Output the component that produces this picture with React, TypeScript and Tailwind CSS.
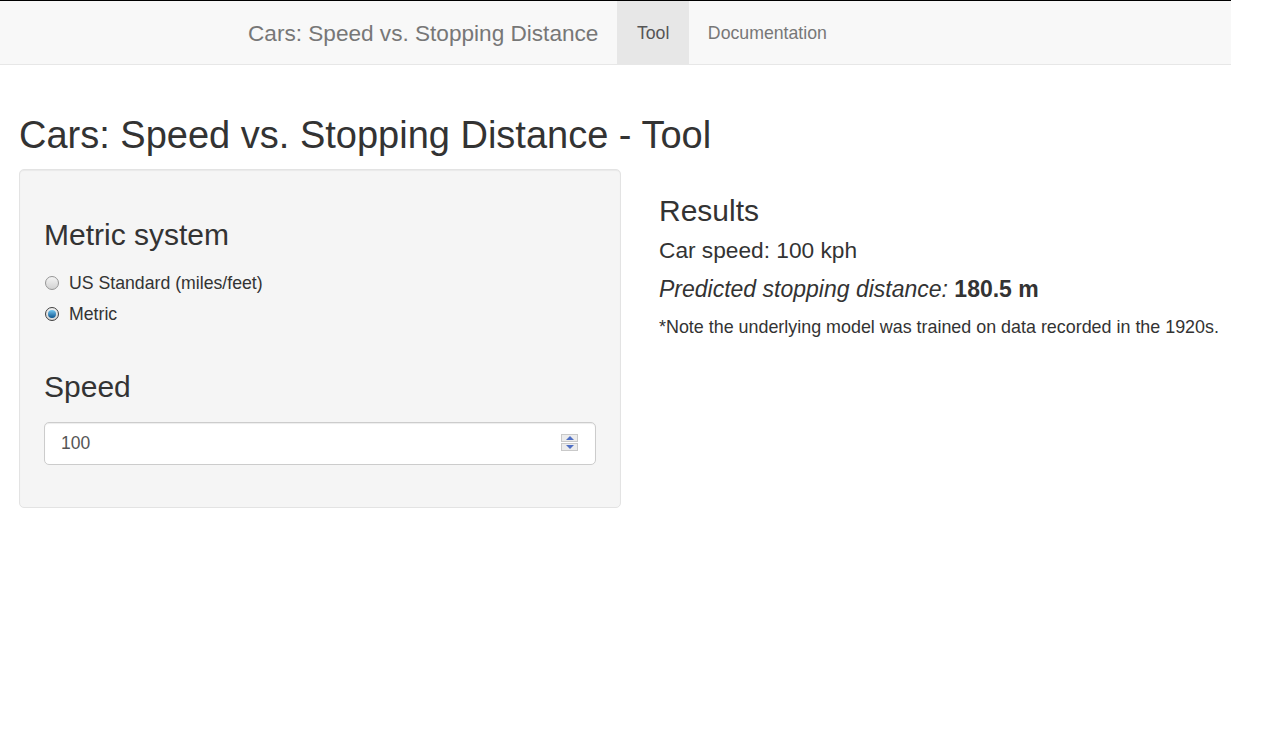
import React from "react";

function Radio({ checked }: { checked?: boolean }) {
  if (checked) {
    return (
      <span className="flex h-[14px] w-[14px] items-center justify-center rounded-full border border-[#3f3f3f] bg-gradient-to-b from-[#f0f0f0] to-[#d8d8d8]">
        <span className="h-[8px] w-[8px] rounded-full bg-gradient-to-b from-[#73c8f2] to-[#08568f]" />
      </span>
    );
  }
  return (
    <span className="h-[14px] w-[14px] rounded-full border border-[#959595] bg-gradient-to-b from-[#f4f4f4] to-[#d2d2d2]" />
  );
}

function Spinner() {
  return (
    <div className="flex h-[18px] w-[17px] flex-col gap-[1px]">
      <div className="flex h-[8px] items-center justify-center border border-[#c9c9c9] bg-[#ececec]">
        <span className="h-0 w-0 border-x-[4px] border-b-[4px] border-x-transparent border-b-[#4f6fc4]" />
      </div>
      <div className="flex h-[8px] items-center justify-center border border-[#c9c9c9] bg-[#ececec]">
        <span className="h-0 w-0 border-x-[4px] border-t-[4px] border-x-transparent border-t-[#4f6fc4]" />
      </div>
    </div>
  );
}

export default function App() {
  return (
    <div className="h-[749px] w-[1266px] bg-white font-['Liberation_Sans',Arial,sans-serif] text-[#333]">
      {/* Navbar */}
      <div className="flex h-[65px] w-[1231px] border-t border-b border-t-black border-b-[#e7e7e7] bg-[#f8f8f8] pl-[248px]">
        <div className="flex items-center pt-[2px] pr-[19px] text-[22.6px] text-[#777]">
          Cars: Speed vs. Stopping Distance
        </div>
        <div className="flex items-center bg-[#e7e7e7] px-[19.5px] pt-[2px] text-[17.7px] text-[#555]">Tool</div>
        <div className="flex items-center px-[19px] pt-[2px] text-[17.7px] text-[#777]">Documentation</div>
      </div>

      <div className="px-[19px]">
        <h2 className="mt-[49.5px] mb-[12.5px] text-[38px] leading-[1.1]">
          Cars: Speed vs. Stopping Distance - Tool
        </h2>

        <div className="flex items-start">
          {/* Sidebar panel */}
          <div className="w-[602px] rounded-[5px] border border-[#e3e3e3] bg-[#f5f5f5] px-[24px] pt-[24px] pb-[42px] shadow-[inset_0_1px_1px_rgba(0,0,0,0.05)]">
            <h3 className="mt-[24.5px] text-[30px] leading-[1.1]">Metric system</h3>
            <div className="mt-[19px] flex flex-col gap-[6px] text-[17.7px]">
              <label className="flex h-[25px] items-center gap-[10px] pl-px">
                <Radio />
                <span>US Standard (miles/feet)</span>
              </label>
              <label className="flex h-[25px] items-center gap-[10px] pl-px">
                <Radio checked />
                <span>Metric</span>
              </label>
            </div>
            <h3 className="mt-[43.5px] text-[30px] leading-[1.1]">Speed</h3>
            <div className="mt-[19px] flex h-[43px] items-center justify-between rounded-[5px] border border-[#ccc] bg-white pl-[16px] pr-[17px] text-[17.5px] text-[#555] shadow-[inset_0_1px_1px_rgba(0,0,0,0.075)]">
              <span>100</span>
              <Spinner />
            </div>
          </div>

          {/* Results */}
          <div className="ml-[38px] flex flex-col">
            <h3 className="mt-[25.5px] text-[30px] leading-[1.1]">Results</h3>
            <p className="mt-[11px] text-[22.7px] leading-[1.1]">Car speed: 100 kph</p>
            <p className="mt-[13.5px] text-[23px] leading-[1.1]">
              <em>Predicted stopping distance:</em> <strong>180.5 m</strong>
            </p>
            <p className="mt-[13px] text-[17.9px] leading-[25px]">
              *Note the underlying model was trained on data recorded in the 1920s.
            </p>
          </div>
        </div>
      </div>
    </div>
  );
}
